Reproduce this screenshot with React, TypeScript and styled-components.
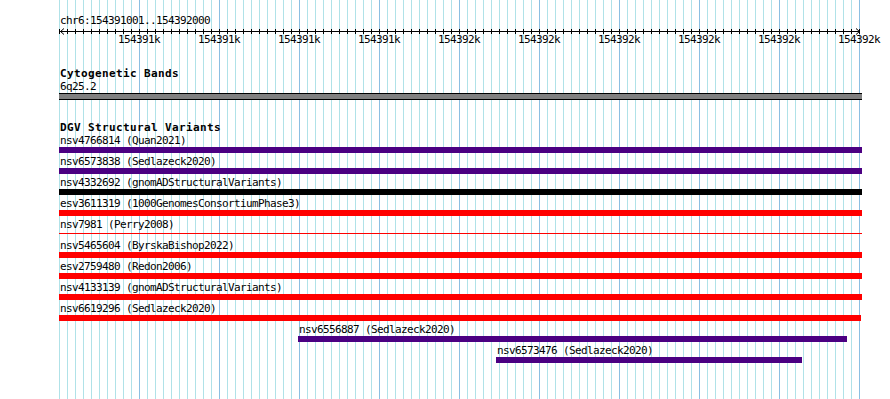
import React from "react";
import styled, { createGlobalStyle } from "styled-components";

const MINOR = "#b0e2e8";
const MAJOR = "#8cbfe2";

const Global = createGlobalStyle`
  html, body { margin: 0; padding: 0; background: #ffffff; }
  body { font-family: "DejaVu Sans Mono", "Liberation Mono", monospace; color: #000; }
`;

/* Page stacks the grid drawing and the track content in the same grid cell */
const Page = styled.div`
  width: 890px;
  height: 399px;
  overflow: hidden;
  background: #ffffff;
  display: grid;
  grid-template: 399px / 890px;
`;

const GridSvg = styled.svg`
  grid-area: 1 / 1;
  display: block;
`;

const Content = styled.div`
  grid-area: 1 / 1;
  padding-top: 14px;
  padding-left: 60px;
  z-index: 1;
`;

const Section = styled.section<{ $gap: number }>`
  margin-top: ${(p) => p.$gap}px;
`;

const SmallText = styled.div`
  font-size: 11px;
  letter-spacing: -0.622px;
  line-height: 13px;
  height: 13px;
  white-space: nowrap;
`;

const TrackTitle = styled.div<{ $lh: number }>`
  font-weight: bold;
  font-size: 11px;
  letter-spacing: 0.378px;
  line-height: ${(p) => p.$lh}px;
  height: ${(p) => p.$lh}px;
  white-space: nowrap;
`;

const AxisSvg = styled.svg`
  display: block;
  overflow: visible;
  margin-left: -60px;
`;

const TickLabels = styled.div`
  display: flex;
  margin-left: 39px;
  width: 800px;
`;

const TickLabel = styled.div`
  flex: 0 0 80px;
  text-align: center;
  font-size: 11px;
  letter-spacing: -0.622px;
  line-height: 13px;
  height: 13px;
  white-space: nowrap;
`;

const BandBar = styled.div`
  margin-left: -1px;
  width: 803px;
  height: 5px;
  background: #808080;
  border-top: 1px solid #000;
  border-bottom: 1px solid #000;
`;

const Row = styled.div`
  margin-bottom: 2px;
`;

const FeatureLabel = styled.div<{ $start: number }>`
  margin-left: ${(p) => p.$start}px;
  font-size: 11px;
  letter-spacing: -0.622px;
  line-height: 13px;
  height: 13px;
  white-space: nowrap;
`;

const BarSlot = styled.div`
  height: 6px;
  display: flex;
  align-items: flex-start;
`;

const Bar = styled.div<{ $start: number; $width: number; $color: string; $thin?: boolean }>`
  flex: none;
  margin-left: ${(p) => p.$start}px;
  width: ${(p) => p.$width}px;
  height: ${(p) => (p.$thin ? 1 : 6)}px;
  margin-top: ${(p) => (p.$thin ? 2 : 0)}px;
  background: ${(p) => p.$color};
`;

const INDIGO = "#4b0082";
const RED = "#ff0000";
const BLACK = "#000000";

type Feature = { id: string; src: string; start: number; width: number; color: string; thin?: boolean };

const features: Feature[] = [
  { id: "nsv4766814", src: "Quan2021", start: 59, width: 803, color: INDIGO },
  { id: "nsv6573838", src: "Sedlazeck2020", start: 59, width: 803, color: INDIGO },
  { id: "nsv4332692", src: "gnomADStructuralVariants", start: 59, width: 803, color: BLACK },
  { id: "esv3611319", src: "1000GenomesConsortiumPhase3", start: 59, width: 803, color: RED },
  { id: "nsv7981", src: "Perry2008", start: 59, width: 803, color: RED, thin: true },
  { id: "nsv5465604", src: "ByrskaBishop2022", start: 59, width: 803, color: RED },
  { id: "esv2759480", src: "Redon2006", start: 59, width: 803, color: RED },
  { id: "nsv4133139", src: "gnomADStructuralVariants", start: 59, width: 803, color: RED },
  { id: "nsv6619296", src: "Sedlazeck2020", start: 59, width: 802, color: RED },
  { id: "nsv6556887", src: "Sedlazeck2020", start: 298, width: 549, color: INDIGO },
  { id: "nsv6573476", src: "Sedlazeck2020", start: 496, width: 306, color: INDIGO },
];

const tickLabels = [
  "154391k", "154391k", "154391k", "154391k",
  "154392k", "154392k", "154392k", "154392k", "154392k", "154392k",
];

// page x of the content edge
const ORIGIN = 60;

function GridLines() {
  const lines = [];
  for (let k = 0; k <= 100; k++) {
    const x = 59 + 8 * k;
    const major = k > 0 && k % 10 === 0;
    lines.push(<rect key={k} x={x} y={0} width={1} height={399} fill={major ? MAJOR : MINOR} />);
  }
  return (
    <GridSvg width={890} height={399} viewBox="0 0 890 399" aria-hidden>
      {lines}
    </GridSvg>
  );
}

function Axis() {
  const ticks = [];
  for (let k = 0; k <= 100; k++) {
    const x = 59.5 + 8 * k;
    ticks.push(<line key={k} x1={x} x2={x} y1={2} y2={7} stroke="#000" strokeWidth={1} shapeRendering="crispEdges" />);
  }
  return (
    <AxisSvg width={890} height={6} viewBox="0 0 890 6">
      <line x1={60} x2={860} y1={4.5} y2={4.5} stroke="#000" strokeWidth={1} shapeRendering="crispEdges" />
      {ticks}
      <polyline points="64,1.5 60.5,4.5 64,7.5" fill="none" stroke="#000" strokeWidth={1} />
      <polyline points="856,1.5 859.5,4.5 856,7.5" fill="none" stroke="#000" strokeWidth={1} />
    </AxisSvg>
  );
}

export default function App() {
  return (
    <>
      <Global />
      <Page>
        <GridLines />
        <Content>
          <Section $gap={0}>
            <SmallText>chr6:154391001..154392000</SmallText>
            <Axis />
            <TickLabels>
              {tickLabels.map((t, i) => (
                <TickLabel key={i}>{t}</TickLabel>
              ))}
            </TickLabels>
          </Section>
          <Section $gap={21}>
            <TrackTitle $lh={13}>Cytogenetic Bands</TrackTitle>
            <SmallText>6q25.2</SmallText>
            <BandBar />
          </Section>
          <Section $gap={22}>
            <TrackTitle $lh={12}>DGV Structural Variants</TrackTitle>
            {features.map((f) => (
              <Row key={f.id}>
                <FeatureLabel $start={f.start + 1 - ORIGIN}>
                  {f.id} ({f.src})
                </FeatureLabel>
                <BarSlot>
                  <Bar $start={f.start - ORIGIN} $width={f.width} $color={f.color} $thin={f.thin} />
                </BarSlot>
              </Row>
            ))}
          </Section>
        </Content>
      </Page>
    </>
  );
}
